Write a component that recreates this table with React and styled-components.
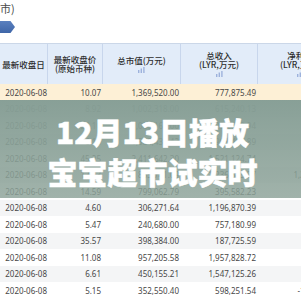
import React from 'react';
import styled, { createGlobalStyle, css } from 'styled-components';

const GlobalStyle = createGlobalStyle`
  html, body {
    margin: 0;
    padding: 0;
    background: #ffffff;
  }
  body {
    font-family: 'Noto Sans', 'Noto Sans CJK SC', sans-serif;
  }
`;

const Page = styled.div`
  position: relative;
  width: 301px;
  height: 301px;
  overflow: hidden;
  background: #ffffff;
`;

const Caption = styled.div`
  height: 17px;
  line-height: 17px;
  font-size: 11px;
  color: #4a4a4a;
  font-family: 'Noto Sans CJK SC', sans-serif;
`;

const Tab = styled.div`
  width: 15px;
  height: 12px;
  margin-top: 4px;
  background: linear-gradient(#5a80bf, #3f66a8);
  clip-path: polygon(0 0, 70% 0, 100% 50%, 70% 100%, 0 100%);
`;

const Table = styled.div`
  margin-top: 10px;
  width: 343px;
  border-top: 1px solid #cbd7e8;
`;

const COLUMNS = '48px 55px 78px 77px 85px';

const HeadRow = styled.div`
  display: grid;
  grid-template-columns: ${COLUMNS};
  height: 40px;
  background: #e2ecf9;
`;

const HeadCell = styled.div`
  display: flex;
  flex-direction: column;
  align-items: center;
  justify-content: center;
  border-right: 1px solid #c8d6ec;
  font-family: 'Noto Sans CJK SC', sans-serif;
  font-size: 8.5px;
  font-weight: 500;
  line-height: 9px;
  color: #2e2e2e;
  text-align: center;
`;

const Row = styled.div`
  display: grid;
  grid-template-columns: ${COLUMNS};
  height: 16.5px;
  align-items: center;
  background: ${({ striped }) => (striped ? '#f4f5f6' : '#ffffff')};
  ${({ active }) =>
    active &&
    css`
      background: #fdf0d6;
    `}
`;

const Cell = styled.div`
  padding-right: 2px;
  text-align: right;
  font-size: 8px;
  color: #474747;
  white-space: nowrap;
  ${({ first }) =>
    first &&
    css`
      padding-right: 1px;
    `}
`;

const Overlay = styled.div`
  position: absolute;
  top: 100px;
  left: 0;
  right: 0;
  height: 98px;
  padding-top: 11px;
  box-sizing: border-box;
  background: linear-gradient(rgba(134, 158, 149, 0.98), rgba(140, 162, 152, 0.82));
  display: flex;
  flex-direction: column;
  align-items: center;
`;

const Title = styled.div`
  font-family: 'Noto Sans CJK SC', sans-serif;
  font-weight: 900;
  font-size: 30px;
  line-height: 40px;
  color: #ffffff;
  -webkit-text-stroke: 0.5px #ffffff;
  text-align: center;
  padding-left: 4px;
`;

const BarIcon = () => (
  <svg width="7" height="6" viewBox="0 0 7 6" style={{ marginTop: 2 }}>
    <rect x="0" y="3" width="1.4" height="3" fill="#9db2dc" />
    <rect x="2.6" y="1.5" width="1.4" height="4.5" fill="#9db2dc" />
    <rect x="5.2" y="0" width="1.4" height="6" fill="#9db2dc" />
  </svg>
);

const rows = [
  ['10.07', '1,369,520.00', '777,875.49', '88,812.41'],
  ['8.92', '1,002,318.00', '615,240.13', '42,530.10'],
  ['24.10', '1,086,160.00', '1,254,690.94', '96,720.33'],
  ['6.18', '1,558,436.42', '903,417.89', '51,208.76'],
  ['45.25', '2,411,642.30', '1,521,124.74', '73,115.20'],
  ['12.63', '855,741.09', '1,236,683.57', '1,225,093.47'],
  ['14.59', '799,062.79', '395,582.23', '31,650.28'],
  ['4.60', '306,271.64', '1,196,870.39', '62,008.51'],
  ['5.47', '240,680.00', '757,180.99', '45,871.02'],
  ['35.57', '398,384.00', '187,725.59', '18,334.60'],
  ['11.08', '957,205.58', '1,957,828.72', '97,540.13'],
  ['6.61', '450,155.21', '1,547,125.26', '80,212.95'],
  ['5.15', '352,550.40', '598,251.54', '-126,434.02'],
];

const App = () => (
  <Page>
    <GlobalStyle />
    <Caption>市)</Caption>
    <Tab />
    <Table>
      <HeadRow>
        <HeadCell>最新收盘日</HeadCell>
        <HeadCell>
          <span>最新收盘价</span>
          <span>(原始币种)</span>
        </HeadCell>
        <HeadCell>
          <span>总市值(万元)</span>
          <BarIcon />
        </HeadCell>
        <HeadCell>
          <span>总收入</span>
          <span>(LYR,万元)</span>
          <BarIcon />
        </HeadCell>
        <HeadCell>
          <span>净利润</span>
          <span>(LYR,万元)</span>
          <BarIcon />
        </HeadCell>
      </HeadRow>
      {rows.map((r, i) => (
        <Row key={i} active={i === 0} striped={i % 2 === 1}>
          <Cell first>2020-06-08</Cell>
          {r.map((v, j) => (
            <Cell key={j}>{v}</Cell>
          ))}
        </Row>
      ))}
    </Table>
    <Overlay>
      <Title>12月13日播放</Title>
      <Title>宝宝超市试实时</Title>
    </Overlay>
  </Page>
);

export default App;
